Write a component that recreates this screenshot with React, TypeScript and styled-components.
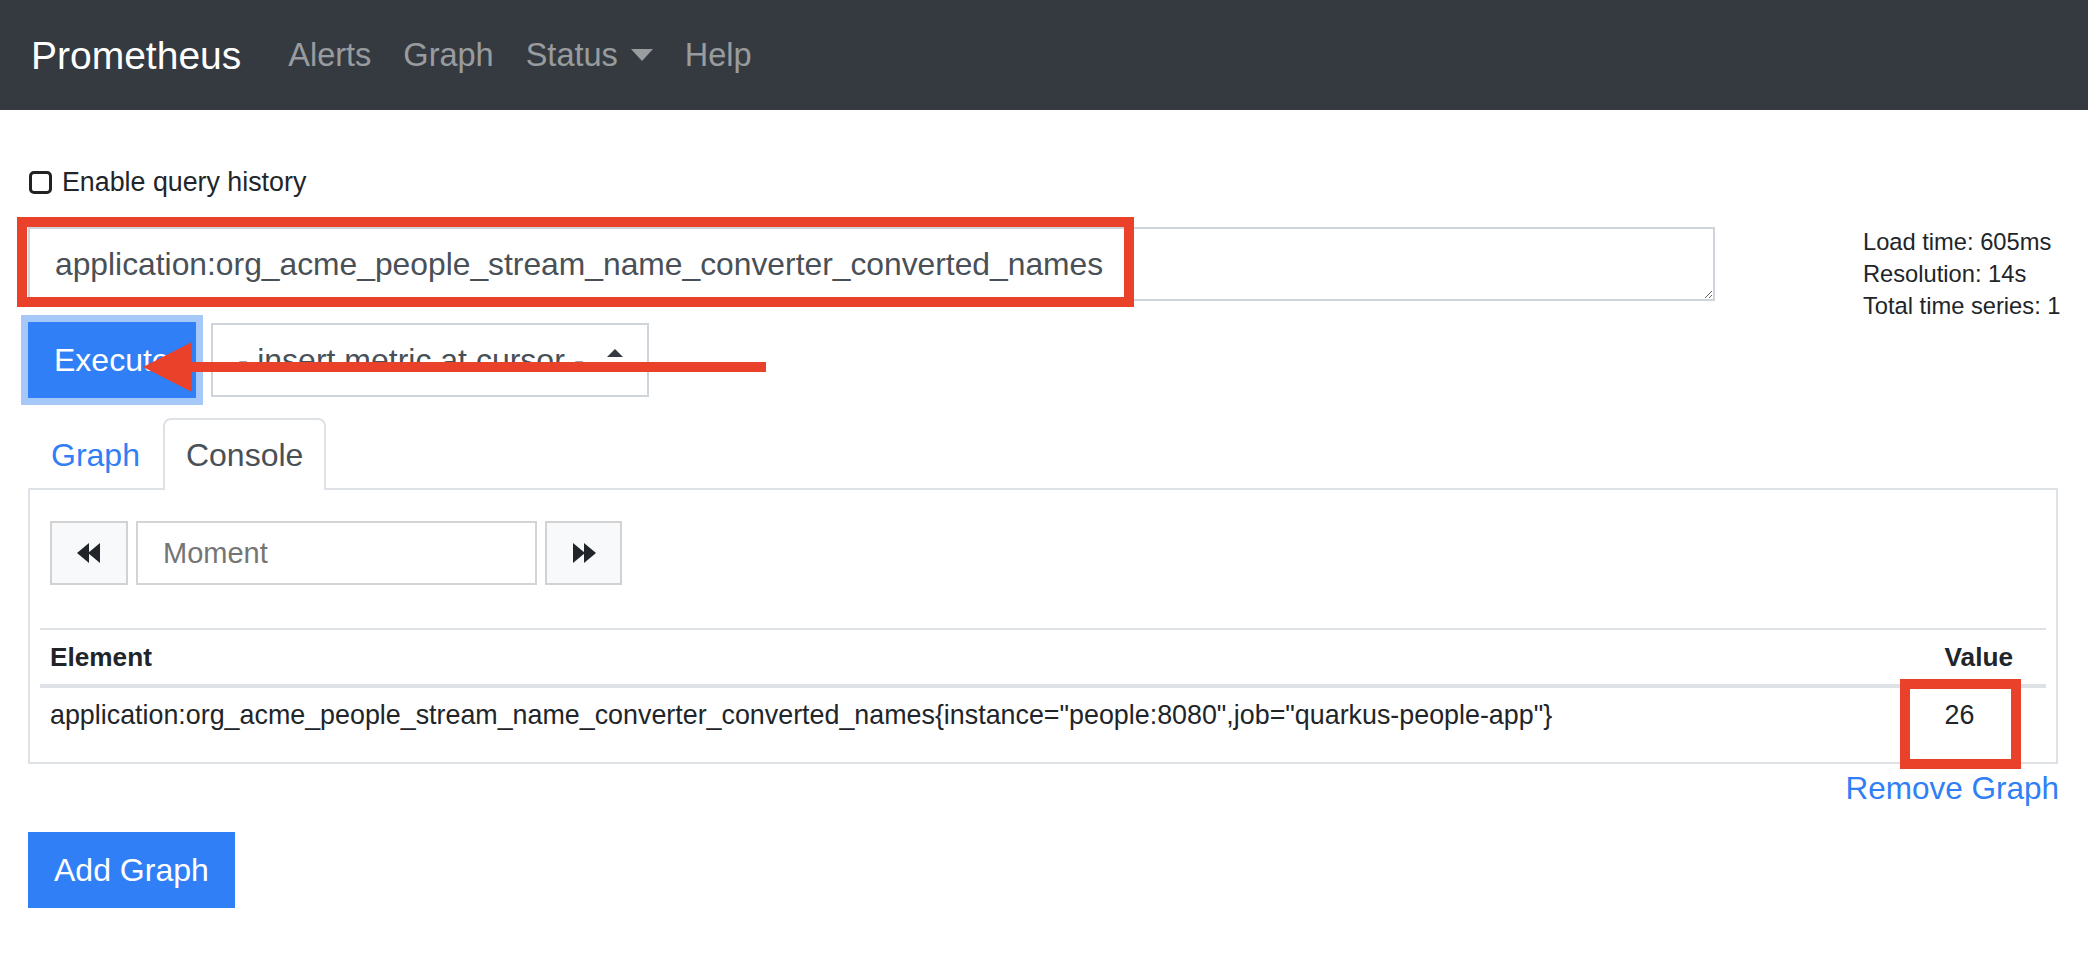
import React from 'react';
import styled, { createGlobalStyle } from 'styled-components';

const GlobalStyle = createGlobalStyle`
  html, body { margin: 0; padding: 0; background: #fff; }
  body {
    font-family: "Liberation Sans", Arial, Helvetica, sans-serif;
    color: #212529;
  }
  * { box-sizing: border-box; }
`;

const BLUE = '#307ff6';
const RED = '#e9412a';

const Page = styled.div`
  position: relative;
  width: 2088px;
  min-height: 960px;
`;

const Navbar = styled.nav`
  height: 110px;
  background: #343a40;
  display: flex;
  align-items: center;
  padding: 0 31px;
`;

const Brand = styled.a`
  font-size: 39px;
  color: #fff;
  margin-right: 31px;
  text-decoration: none;
  line-height: 1;
`;

const NavLink = styled.a`
  font-size: 32.5px;
  line-height: 1;
  color: rgba(255, 255, 255, 0.5);
  padding: 0 16px;
  display: flex;
  align-items: center;
  text-decoration: none;
`;

const Caret = styled.span`
  display: inline-block;
  margin-left: 13px;
  width: 0;
  height: 0;
  border-left: 11.5px solid transparent;
  border-right: 11.5px solid transparent;
  border-top: 12px solid rgba(255, 255, 255, 0.5);
`;

const Main = styled.main`
  padding: 52px 30px 40px 28px;
`;

const HistoryRow = styled.label`
  display: flex;
  align-items: center;
  gap: 10px;
  height: 40px;
  font-size: 26.8px;
  color: #212529;
`;

const CheckBox = styled.span`
  width: 23px;
  height: 23px;
  margin-left: 1px;
  border: 3px solid #222;
  border-radius: 5px;
  background: #fff;
`;

const QueryArea = styled.div`
  display: grid;
  grid-template-columns: 1687px 1fr;
  margin-top: 25px;
`;

const QueryColumn = styled.div`
  display: flex;
  flex-direction: column;
`;

const ExprInput = styled.textarea`
  width: 1687px;
  height: 74px;
  border: 2px solid #ced4da;
  border-radius: 0;
  padding: 11px 25px;
  font-family: "Liberation Sans", Arial, sans-serif;
  font-size: 31.8px;
  line-height: 48px;
  color: #495057;
  resize: vertical;
  overflow: hidden;
  outline: none;
  display: block;
`;

const Stats = styled.div`
  justify-self: end;
  width: 195px;
  margin-top: -1px;
  font-size: 23.7px;
  line-height: 32px;
  color: #212529;
  white-space: nowrap;
`;

const ActionRow = styled.div`
  display: flex;
  align-items: flex-start;
  gap: 15px;
  margin-top: 21px;
`;

const PrimaryButton = styled.button<{ $focused?: boolean }>`
  height: 76px;
  padding: 0 26px;
  border: none;
  background: ${BLUE};
  color: #fff;
  font-family: "Liberation Sans", Arial, sans-serif;
  font-size: 32px;
  line-height: 38px;
  cursor: pointer;
  box-shadow: ${(p) => (p.$focused ? '0 0 0 7px #a6c8f8' : 'none')};
`;

const MetricSelect = styled.div`
  width: 438px;
  height: 74px;
  margin-top: 1px;
  border: 2px solid #ced4da;
  display: flex;
  align-items: center;
  padding: 0 24px 0 25px;
  font-size: 32px;
  line-height: 38px;
  color: #495057;
`;

const SelectCaret = styled.svg`
  margin-left: auto;
  flex: none;
`;

const TabList = styled.div`
  display: flex;
  margin-top: 20px;
`;

const Tab = styled.div<{ $active?: boolean }>`
  position: relative;
  z-index: 1;
  height: 72px;
  margin-bottom: -2px;
  padding: 16px 21px 0;
  font-size: 32px;
  line-height: 38px;
  border: 2px solid ${(p) => (p.$active ? '#dee2e6' : 'transparent')};
  border-bottom: none;
  border-radius: 8px 8px 0 0;
  background: ${(p) => (p.$active ? '#fff' : 'transparent')};
  color: ${(p) => (p.$active ? '#495057' : BLUE)};
`;

const Panel = styled.div`
  border: 2px solid #dee2e6;
  padding: 31px 10px 20px;
`;

const MomentGroup = styled.div`
  display: flex;
  gap: 8px;
  margin-left: 10px;
  height: 64px;
`;

const StepButton = styled.button<{ $w: number }>`
  width: ${(p) => p.$w}px;
  height: 64px;
  background: #f8f9fa;
  border: 2px solid #d2d2d2;
  display: flex;
  align-items: center;
  justify-content: center;
  padding: 0;
`;

const MomentInput = styled.input`
  width: 401px;
  height: 64px;
  border: 2px solid #d4d4d4;
  padding: 0 25px;
  font-family: "Liberation Sans", Arial, sans-serif;
  font-size: 29px;
  color: #495057;
  outline: none;
  &::placeholder { color: #757575; }
`;

const Table = styled.table`
  width: 100%;
  margin-top: 43px;
  border-collapse: collapse;
  font-size: 26.85px;
  line-height: 40px;
  color: #212529;
`;

const Th = styled.th<{ $last?: boolean }>`
  text-align: left;
  width: ${(p) => (p.$last ? 'auto' : '100%')};
  padding: 7px ${(p) => (p.$last ? '33px' : '10px')} 7px 10px;
  border-top: 2px solid #dee2e6;
  border-bottom: 4px solid #dee2e6;
  font-weight: bold;
  font-size: 26.2px;
  white-space: nowrap;
`;

const Td = styled.td<{ $last?: boolean }>`
  text-align: left;
  padding: 7px ${(p) => (p.$last ? '33px' : '10px')} 7px 10px;
  white-space: nowrap;
`;

const RemoveRow = styled.div`
  display: flex;
  justify-content: flex-end;
  margin-top: 5px;
`;

const LinkText = styled.a`
  font-size: 31.5px;
  line-height: 38px;
  color: ${BLUE};
  text-decoration: none;
  margin-right: -1px;
`;

const AddRow = styled.div`
  margin-top: 25px;
`;

const HighlightBox = styled.div<{ $x: number; $y: number; $w: number; $h: number }>`
  position: absolute;
  left: ${(p) => p.$x}px;
  top: ${(p) => p.$y}px;
  width: ${(p) => p.$w}px;
  height: ${(p) => p.$h}px;
  border: 10px solid ${RED};
  pointer-events: none;
`;

const ArrowSvg = styled.svg`
  position: absolute;
  left: 140px;
  top: 340px;
  pointer-events: none;
`;

const Backward = () => (
  <svg width="24" height="20" viewBox="0 0 24 20">
    <polygon points="0,10 12,0 12,20" fill="#212529" />
    <polygon points="11,10 23,0 23,20" fill="#212529" />
  </svg>
);

const Forward = () => (
  <svg width="24" height="20" viewBox="0 0 24 20">
    <polygon points="24,10 12,0 12,20" fill="#212529" />
    <polygon points="13,10 1,0 1,20" fill="#212529" />
  </svg>
);

const query = 'application:org_acme_people_stream_name_converter_converted_names';

export default function App() {
  return (
    <Page>
      <GlobalStyle />
      <Navbar>
        <Brand>Prometheus</Brand>
        <NavLink>Alerts</NavLink>
        <NavLink>Graph</NavLink>
        <NavLink>
          Status
          <Caret />
        </NavLink>
        <NavLink>Help</NavLink>
      </Navbar>
      <Main>
        <HistoryRow>
          <CheckBox />
          Enable query history
        </HistoryRow>
        <QueryArea>
          <QueryColumn>
            <ExprInput readOnly value={query} rows={1} spellCheck={false} />
            <ActionRow>
              <PrimaryButton $focused>Execute</PrimaryButton>
              <MetricSelect>
                - insert metric at cursor -
                <SelectCaret width="16" height="22" viewBox="0 0 16 22">
                  <polygon points="0,8 8,0 16,8" fill="#343a40" />
                  <polygon points="0,14 8,22 16,14" fill="#343a40" />
                </SelectCaret>
              </MetricSelect>
            </ActionRow>
          </QueryColumn>
          <Stats>
            <div>Load time: 605ms</div>
            <div>Resolution: 14s</div>
            <div>Total time series: 1</div>
          </Stats>
        </QueryArea>
        <TabList>
          <Tab>Graph</Tab>
          <Tab $active>Console</Tab>
        </TabList>
        <Panel>
          <MomentGroup>
            <StepButton $w={78}>
              <Backward />
            </StepButton>
            <MomentInput placeholder="Moment" />
            <StepButton $w={77}>
              <Forward />
            </StepButton>
          </MomentGroup>
          <Table>
            <thead>
              <tr>
                <Th>Element</Th>
                <Th $last>Value</Th>
              </tr>
            </thead>
            <tbody>
              <tr>
                <Td>
                  {query}
                  {'{instance="people:8080",job="quarkus-people-app"}'}
                </Td>
                <Td $last>26</Td>
              </tr>
            </tbody>
          </Table>
        </Panel>
        <RemoveRow>
          <LinkText>Remove Graph</LinkText>
        </RemoveRow>
        <AddRow>
          <PrimaryButton>Add Graph</PrimaryButton>
        </AddRow>
      </Main>
      <HighlightBox $x={17} $y={217} $w={1117} $h={90} />
      <HighlightBox $x={1900} $y={679} $w={121} $h={90} />
      <ArrowSvg width="630" height="54" viewBox="0 0 630 54">
        <rect x="50" y="22" width="576" height="10" fill={RED} />
        <polygon points="3,27 52,2 52,52" fill={RED} />
      </ArrowSvg>
    </Page>
  );
}
